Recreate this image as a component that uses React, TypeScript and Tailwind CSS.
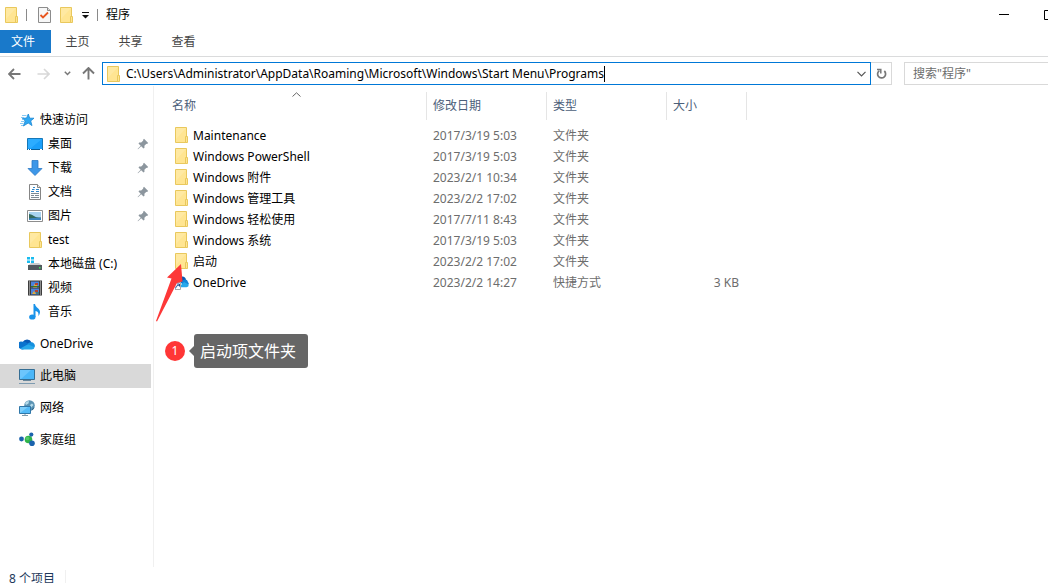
import React, { useState } from 'react';

type IconProps = { className?: string };

const FolderIcon: React.FC<IconProps> = ({ className = '' }) => (
  <svg className={`shrink-0 ${className}`} width="13" height="16" viewBox="0 0 13 16">
    <path d="M.5.5H11.5V15.5H.5Z" fill="#ffe592" stroke="#e9c85d" />
    <path d="M1 1H11L1 12Z" fill="#ffe9a2" />
    <path d="M10.5 15.5V9.5H12.5V15.5Z" fill="#ffe592" stroke="#e9c85d" />
  </svg>
);

const CheckDocIcon = () => (
  <svg width="13" height="16" viewBox="0 0 13 16">
    <path d="M.5.5H9.5L12.5 3.5V15.5H.5Z" fill="#f7f7f7" stroke="#8c8c8c" />
    <path d="M9.5.5V3.5H12.5" fill="#ddd" stroke="#8c8c8c" />
    <path d="M2.5 8L5 10.5L10 5.5" fill="none" stroke="#e8561f" strokeWidth="1.8" />
  </svg>
);

const StarIcon = () => (
  <svg width="16" height="16" viewBox="0 0 16 16">
    <path
      d="M9.3 2L10.7 6.2H15L11.7 8.9L13 13.6L9.2 11L4.4 14L6.2 9L3.4 6.3L7.6 6Z"
      fill="#2ea8f3"
      stroke="#1b87d3"
      strokeWidth=".8"
      strokeLinejoin="round"
    />
    <path d="M3 3.5H7.5M2 5.5H5M3 7.5H5M2 9.5H5.5M1 11.5H4.5M2 13.5H4" stroke="#6cbcf0" strokeWidth=".8" />
  </svg>
);

const DesktopIcon = () => (
  <svg width="16" height="16" viewBox="0 0 16 16">
    <path d="M.5 2.5H15.5V13.5H.5Z" fill="#1a9ffa" stroke="#1678b8" />
    <path d="M1 12V3H15L4 12Z" fill="#2cacff" />
    <path d="M0 13.5H16" stroke="#0b5e97" />
    <path d="M1 13.5H2M3 13.5H4M13 13.5H15" stroke="#fff" />
  </svg>
);

const DownloadIcon = () => (
  <svg width="16" height="16" viewBox="0 0 16 16">
    <path d="M5 .5H11V8.5H15L8 15.5L1 8.5H5Z" fill="#3d97e8" stroke="#2b7ac6" strokeWidth=".8" />
  </svg>
);

const DocumentIcon = () => (
  <svg width="16" height="16" viewBox="0 0 16 16">
    <path d="M2.5.5H10.5L13.5 3.5V15.5H2.5Z" fill="#fff" stroke="#858585" />
    <path d="M10.5.5V3.5H13.5" fill="#eee" stroke="#858585" />
    <path d="M4 9.5H12M4 11.5H7M8 11.5H12M4 13.5H12" stroke="#7f8b94" />
    <path d="M4 7.5H7M9 5.5H12M9 7.5H12M5 5.5H7.5M6 3.5H8" stroke="#2f87cb" />
  </svg>
);

const PictureIcon = () => (
  <svg width="16" height="16" viewBox="0 0 16 16">
    <path d="M.5 2.5H15.5V13.5H.5Z" fill="#fff" stroke="#8d8d8d" />
    <path d="M2 4H14V12H2Z" fill="#a9d3f0" />
    <path d="M2 6Q5 6.5 7 8T14 9.5V11H2Z" fill="#34695c" />
    <path d="M2 10.5Q8 9.5 14 10V12H2Z" fill="#3b83bd" />
  </svg>
);

const DriveIcon = () => (
  <svg width="16" height="16" viewBox="0 0 16 16">
    <path d="M0 1H3V3.5H0ZM4 1H7V3.5H4ZM0 4.5H3V7H0ZM4 4.5H7V7H4Z" fill="#19bbef" />
    <path d="M4 7H12L15 9.5H1Z" fill="#c9cccd" />
    <path d="M1 9H15V14H1Z" fill="#525a5e" />
    <path d="M12 11H13.5V12.5H12Z" fill="#3aeb54" />
  </svg>
);

const VideoIcon = () => (
  <svg width="16" height="16" viewBox="0 0 16 16">
    <path d="M1 .5H15V15.5H1Z" fill="#343434" />
    <path d="M2.5 1.5V15M13.5 1.5V15" stroke="#e8e8e8" strokeWidth="1.2" strokeDasharray="1 1" />
    <path d="M4 1.5H12V7.5H4ZM4 8.5H12V14.5H4Z" fill="#4b83dc" />
    <path d="M6 7.5L7.5 4L10 5V7.5ZM5 14L7 11L9 14Z" fill="#e5ad38" />
    <path d="M8 3H11V5H8ZM8 10H11V12H8Z" fill="#b5432e" />
    <path d="M4 6.5H12M9 13H12" stroke="#37722b" />
  </svg>
);

const MusicIcon = () => (
  <svg width="16" height="16" viewBox="0 0 16 16">
    <ellipse cx="5.3" cy="13" rx="3.2" ry="2.6" fill="#1993ea" />
    <path d="M6.5 0H8C8.5 3.5 13 4.5 13 8C13 9.5 12.3 11 11.3 12C12 9 11 7.5 8.5 7V13H6.5Z" fill="#1993ea" />
  </svg>
);

const CloudIcon = () => (
  <svg width="16" height="16" viewBox="0 0 16 16">
    <path d="M3.6 6.2A5 5 0 0 1 12.6 6.4L9 9Z" fill="#0a5ab5" />
    <path d="M1 12.5A3.6 3.6 0 0 1 3.8 5.8Q6 5.5 8.5 7.2L12 9L4 13.4Q2 13.5 1 12.5Z" fill="#0a73ce" />
    <path d="M8.6 7.8Q10 6 12.2 6.3A3.6 3.6 0 0 1 15.7 11L12 11Z" fill="#1590df" />
    <path d="M1.2 12.6L9 8.2L15.6 11.2Q15.2 13.4 12.8 13.5H4Q2 13.5 1.2 12.6Z" fill="#28a8ea" />
  </svg>
);

const ComputerIcon = () => (
  <svg width="16" height="16" viewBox="0 0 16 16">
    <path d="M.5 1.5H15.5V11.5H.5Z" fill="#4ab6f8" stroke="#356e94" />
    <path d="M1 2H12L2 11H1Z" fill="#6cc5fc" />
    <path d="M4 12.5H12" stroke="#68879c" />
    <path d="M0 15.5H16" stroke="#7e9bb0" />
  </svg>
);

const NetworkIcon = () => (
  <svg width="16" height="16" viewBox="0 0 16 16">
    <circle cx="10.5" cy="5.5" r="5.3" fill="#5b93b3" />
    <path d="M6 3Q8 1 10 1L9.5 3.5L7 5ZM11 5L13 3.5L14.5 5L12 7.5Z" fill="#b4daea" />
    <path d="M13 9L15.4 7Q15 10 12.5 10.8Z" fill="#2c6286" />
    <path d="M.5 6.5H11.5V13.5H.5Z" fill="#53bbf8" stroke="#3077a8" />
    <path d="M1 7H9L1 13Z" fill="#7fcffb" />
    <path d="M6 14V15.5M3 15.5H9" stroke="#7e99aa" />
  </svg>
);

const HomegroupIcon = () => (
  <svg width="16" height="16" viewBox="0 0 16 16">
    <circle cx="9.5" cy="7.5" r="3.8" fill="#2fb34a" />
    <circle cx="8.5" cy="6.5" r="1.8" fill="#55c968" />
    <circle cx="2.5" cy="7" r="2.4" fill="#1b63ad" />
    <circle cx="12.3" cy="2.6" r="2.1" fill="#1b63ad" />
    <circle cx="13" cy="11.2" r="2.8" fill="#1b63ad" />
  </svg>
);

const PinIcon = () => (
  <svg width="12" height="12" viewBox="0 0 12 12">
    <path
      d="M7 .8L11.2 5L10 6L9.4 5.7L7.4 7.8L7.5 9.8L6.5 10.5L4.2 8.2L1 11.3L.6 11L3.7 7.7L1.5 5.4L2.2 4.5L4.2 4.6L6.3 2.6L6 2Z"
      fill="#8c969e"
    />
  </svg>
);

const ShortcutIcon = () => (
  <svg className="shrink-0" width="14" height="16" viewBox="0 0 14 16">
    <path d="M3 7A4 4 0 0 1 11 6L8 10Z" fill="#0a5ab5" />
    <path d="M6 8Q9 4.5 12 6L14 10L8 12Z" fill="#1384d8" />
    <path d="M5 12L9 8L13.8 10.5Q13.8 13 11.5 13.2H5Z" fill="#28a8ea" />
    <path d="M-1.5 8.5H5.5V15.5H-1.5Z" fill="#fff" stroke="#a9a9a9" />
    <path d="M.5 14.5Q.5 11.5 4 11M2 10H4.5V12.5" fill="none" stroke="#1f4f94" />
  </svg>
);

type NavEntry = { label: string; icon: React.ReactNode; pinned?: boolean };

const quickAccess: NavEntry[] = [
  { label: '桌面', icon: <DesktopIcon />, pinned: true },
  { label: '下载', icon: <DownloadIcon />, pinned: true },
  { label: '文档', icon: <DocumentIcon />, pinned: true },
  { label: '图片', icon: <PictureIcon />, pinned: true },
  { label: 'test', icon: <FolderIcon className="ml-[2px]" /> },
  { label: '本地磁盘 (C:)', icon: <DriveIcon /> },
  { label: '视频', icon: <VideoIcon /> },
  { label: '音乐', icon: <MusicIcon /> },
];

const places: NavEntry[] = [
  { label: 'OneDrive', icon: <CloudIcon /> },
  { label: '此电脑', icon: <ComputerIcon /> },
  { label: '网络', icon: <NetworkIcon /> },
  { label: '家庭组', icon: <HomegroupIcon /> },
];

const files = [
  { name: 'Maintenance', date: '2017/3/19 5:03', type: '文件夹', size: '' },
  { name: 'Windows PowerShell', date: '2017/3/19 5:03', type: '文件夹', size: '' },
  { name: 'Windows 附件', date: '2023/2/1 10:34', type: '文件夹', size: '' },
  { name: 'Windows 管理工具', date: '2023/2/2 17:02', type: '文件夹', size: '' },
  { name: 'Windows 轻松使用', date: '2017/7/11 8:43', type: '文件夹', size: '' },
  { name: 'Windows 系统', date: '2017/3/19 5:03', type: '文件夹', size: '' },
  { name: '启动', date: '2023/2/2 17:02', type: '文件夹', size: '' },
  { name: 'OneDrive', date: '2023/2/2 14:27', type: '快捷方式', size: '3 KB' },
];

const TitleBar = () => (
  <header className="flex h-[30px] items-center pl-[5px]">
    <FolderIcon />
    <span className="mx-2 h-3 w-px bg-[#8a8a8a]" />
    <div className="ml-[3px] flex items-center gap-[9px]">
      <button aria-label="属性"><CheckDocIcon /></button>
      <button aria-label="新建文件夹"><FolderIcon /></button>
      <button aria-label="自定义快速访问工具栏">
        <svg width="7" height="8" viewBox="0 0 7 8">
          <path d="M0 1H7V2H0ZM0 4H7L3.5 7.5Z" fill="#111" />
        </svg>
      </button>
    </div>
    <span className="mx-2 h-3 w-px bg-[#8a8a8a]" />
    <h1>程序</h1>
    <div className="ml-auto flex w-[67px] self-stretch overflow-hidden">
      <button aria-label="最小化" className="flex w-[46px] shrink-0 items-center justify-center">
        <svg width="10" height="10" viewBox="0 0 10 10"><path d="M0 4.5H10" stroke="#000" /></svg>
      </button>
      <button aria-label="最大化" className="flex w-[45px] shrink-0 items-center justify-center">
        <svg width="11" height="10" viewBox="0 0 11 10"><path d="M.5.5H10.5V9.5H.5Z" fill="none" stroke="#000" /></svg>
      </button>
    </div>
  </header>
);

const RibbonTabs = () => (
  <nav className="flex border-b border-[#dadbdc] pb-[3px] text-[#444]">
    <button className="h-[23px] w-[51px] bg-[#1979ca] pt-px pr-[5px] text-white">文件</button>
    <button className="w-[53px] pt-px">主页</button>
    <button className="w-[53px] pt-px">共享</button>
    <button className="w-[53px] pt-px">查看</button>
  </nav>
);

const AddressBar = () => {
  const [path, setPath] = useState(
    'C:\\Users\\Administrator\\AppData\\Roaming\\Microsoft\\Windows\\Start Menu\\Programs'
  );

  return (
    <div className="mt-[5px] flex h-[23px]">
      <div className="flex w-[102px] items-center pl-2 text-[#777]">
        <button aria-label="后退">
          <svg width="13" height="12" viewBox="0 0 13 12">
            <path d="M6 1L1 6L6 11M1 6H12.5" fill="none" stroke="currentColor" strokeWidth="1.8" />
          </svg>
        </button>
        <button aria-label="前进" className="ml-4 text-[#d8d8d8]">
          <svg width="13" height="12" viewBox="0 0 13 12">
            <path d="M7 1L12 6L7 11M12 6H.5" fill="none" stroke="currentColor" strokeWidth="1.6" />
          </svg>
        </button>
        <button aria-label="最近浏览的位置" className="ml-[14px]">
          <svg width="7" height="5" viewBox="0 0 7 5">
            <path d="M.8.8L3.5 3.5L6.2.8" fill="none" stroke="currentColor" strokeWidth="1.5" />
          </svg>
        </button>
        <button aria-label="上移" className="ml-[11px]">
          <svg width="13" height="13" viewBox="0 0 13 13">
            <path d="M1 6.5L6.5 1L12 6.5M6.5 1V12.5" fill="none" stroke="currentColor" strokeWidth="1.9" />
          </svg>
        </button>
      </div>
      <div className="flex min-w-0 flex-1 items-center border border-[#0078d7] pl-1">
        <FolderIcon />
        <input
          aria-label="地址"
          className="ml-[6px] field-sizing-content outline-none"
          value={path}
          onChange={(e) => setPath(e.target.value)}
        />
        <span className="h-4 w-px bg-black" />
        <button aria-label="以前的位置" className="mr-1 ml-auto">
          <svg width="9" height="6" viewBox="0 0 9 6">
            <path d="M.5.8L4.5 4.8L8.5.8" fill="none" stroke="#555" strokeWidth="1.2" />
          </svg>
        </button>
      </div>
      <button
        aria-label="刷新"
        className="flex w-[21px] items-center justify-center border border-l-0 border-[#d9d9d9]"
      >
        <svg width="11" height="12" viewBox="0 0 11 12">
          <path d="M8.3 3A4 4 0 1 1 3.4 2.6" fill="none" stroke="#777" strokeWidth="1.7" />
          <path d="M1 1.5H4.8V5.5" fill="none" stroke="#777" strokeWidth="1.5" />
        </svg>
      </button>
      <input
        type="search"
        aria-label="搜索"
        placeholder={'搜索"程序"'}
        className="ml-3 w-36 border border-r-0 border-[#d9d9d9] pl-2 outline-none placeholder:text-[#6d6d6d]"
      />
    </div>
  );
};

const Sidebar = () => (
  <aside className="mb-px w-[154px] shrink-0 border-r border-[#f0f0f0] pt-[22px] pr-[2px]">
    <a href="#quick" className="flex h-6 items-center gap-[5px] pl-[19px]">
      <StarIcon />
      快速访问
    </a>
    <ul>
      {quickAccess.map((item) => (
        <li key={item.label}>
          <a href={`#${item.label}`} className="flex h-6 items-center gap-[5px] pr-[2px] pl-[27px]">
            <span className="w-4">{item.icon}</span>
            {item.label}
            {item.pinned && <span className="ml-auto"><PinIcon /></span>}
          </a>
        </li>
      ))}
    </ul>
    <ul className="mt-2 space-y-2">
      {places.map((item) => (
        <li key={item.label}>
          <a
            href={`#${item.label}`}
            className={`flex h-6 items-center gap-[5px] pl-[19px] ${item.label === '此电脑' ? 'bg-[#d9d9d9]' : ''}`}
          >
            {item.icon}
            {item.label}
          </a>
        </li>
      ))}
    </ul>
  </aside>
);

const HeaderCell: React.FC<{ label: string; className: string; sorted?: boolean }> = ({
  label,
  className,
  sorted,
}) => (
  <th className={`p-0 font-normal ${className}`}>
    <button className="relative flex h-7 w-full items-center border-r border-[#e5e5e5] text-[#4c607a]">
      {label}
      {sorted && (
        <svg className="absolute top-0 left-[120px]" width="9" height="5" viewBox="0 0 9 5">
          <path d="M.5 4.5L4.5.8L8.5 4.5" fill="none" stroke="#666" />
        </svg>
      )}
    </button>
  </th>
);

const FileList = () => (
  <section className="relative min-w-0 flex-1 pt-[6px]">
    <table className="w-[593px] table-fixed border-collapse text-left">
      <thead>
        <tr>
          <HeaderCell label="名称" className="w-[273px] pl-[18px]" sorted />
          <HeaderCell label="修改日期" className="w-[120px] pl-[6px]" />
          <HeaderCell label="类型" className="w-[120px] pl-[6px]" />
          <HeaderCell label="大小" className="w-20 pl-[6px]" />
        </tr>
        <tr className="h-[5px]" />
      </thead>
      <tbody className="text-[#6d6d6d]">
        {files.map((file) => (
          <tr key={file.name} className="h-[21px]">
            <td className="p-0 pl-[21px] text-black">
              <div className="flex items-start">
                <span className="-mt-px w-[18px]">{file.size ? <ShortcutIcon /> : <FolderIcon />}</span>
                {file.name}
              </div>
            </td>
            <td className="p-0 pl-[6px]">{file.date}</td>
            <td className="p-0 pl-[6px]">{file.type}</td>
            <td className="p-0 pr-2 text-right">{file.size}</td>
          </tr>
        ))}
      </tbody>
    </table>

    {/* numbered callout pointing at the startup folder */}
    <svg className="absolute top-[177px] left-px" width="30" height="60" viewBox="0 0 30 60">
      <path d="M26 1L12 14.5L16.5 15.5L1 58L2 58.5L22 20L27.5 18.5Z" fill="#fd3838" />
    </svg>
    <div className="absolute top-[248px] left-[11px] flex items-center">
      <span className="flex size-5 items-center justify-center rounded-full bg-[#ff3636] text-white">1</span>
      <svg className="ml-1" width="5" height="10" viewBox="0 0 5 10">
        <path d="M5 0V10L0 5Z" fill="#666" />
      </svg>
      <p className="rounded-[3px] bg-[#666] py-[5px] pr-3 pl-[6px] text-base text-white">启动项文件夹</p>
    </div>
  </section>
);

export default function App() {
  return (
    <div className="flex h-screen flex-col overflow-hidden bg-white font-['Noto_Sans','Noto_Sans_CJK_SC',sans-serif] text-xs text-black">
      <TitleBar />
      <RibbonTabs />
      <AddressBar />
      <main className="mt-px flex min-h-0 flex-1">
        <Sidebar />
        <FileList />
      </main>
      <footer className="h-[15px] shrink-0 overflow-hidden pt-[3px] pl-[9px] text-[#1e395b]">
        <span className="border-r border-[#f0f0f0] pr-[10px]">8 个项目</span>
      </footer>
    </div>
  );
}
